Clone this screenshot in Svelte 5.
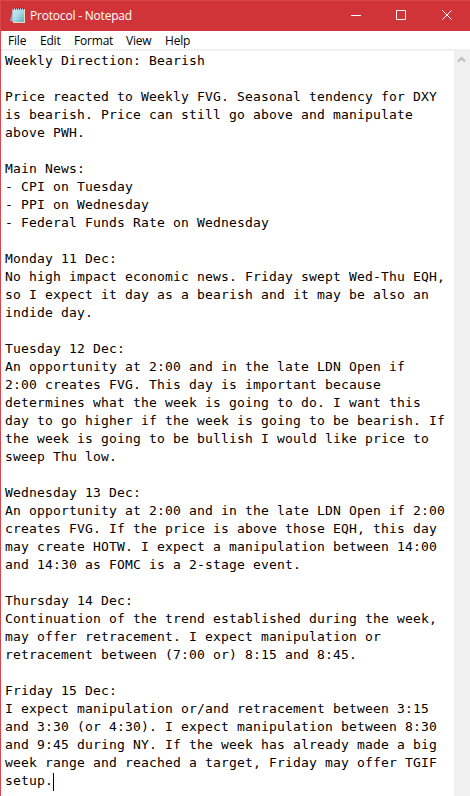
<script>
  const menus = ['File', 'Edit', 'Format', 'View', 'Help'];
  const text = `Weekly Direction: Bearish

Price reacted to Weekly FVG. Seasonal tendency for DXY
is bearish. Price can still go above and manipulate
above PWH.

Main News:
- CPI on Tuesday
- PPI on Wednesday
- Federal Funds Rate on Wednesday

Monday 11 Dec:
No high impact economic news. Friday swept Wed-Thu EQH,
so I expect it day as a bearish and it may be also an
indide day.

Tuesday 12 Dec:
An opportunity at 2:00 and in the late LDN Open if
2:00 creates FVG. This day is important because
determines what the week is going to do. I want this
day to go higher if the week is going to be bearish. If
the week is going to be bullish I would like price to
sweep Thu low.

Wednesday 13 Dec:
An opportunity at 2:00 and in the late LDN Open if 2:00
creates FVG. If the price is above those EQH, this day
may create HOTW. I expect a manipulation between 14:00
and 14:30 as FOMC is a 2-stage event.

Thursday 14 Dec:
Continuation of the trend established during the week,
may offer retracement. I expect manipulation or
retracement between (7:00 or) 8:15 and 8:45.

Friday 15 Dec:
I expect manipulation or/and retracement between 3:15
and 3:30 (or 4:30). I expect manipulation between 8:30
and 9:45 during NY. If the week has already made a big
week range and reached a target, Friday may offer TGIF
setup.`;
</script>

<div class="window">
  <header class="titlebar">
    <svg class="app-icon" width="18" height="18" viewBox="0 0 18 18">
      <defs>
        <linearGradient id="page" x1="0" y1="0" x2="1" y2="1">
          <stop offset="0" stop-color="#d3edf2" />
          <stop offset=".5" stop-color="#a5d6e2" />
          <stop offset="1" stop-color="#4fa9c2" />
        </linearGradient>
      </defs>
      <path d="M4 3L.8 14H4z" fill="#87a9b5" />
      <path d="M4 2H16V16H4z" fill="#e2dcc6" />
      <path d="M3.5 1.5H14.8V14.8H3.5z" fill="url(#page)" />
      <path d="M4 6H14M4 9H14M4 12H14" stroke="#d4edf2" stroke-width=".7" opacity=".6" />
      <path d="M4.5 .5V2.7M6.5 .5V2.7M8.5 .5V2.7M10.5 .5V2.7M12.5 .5V2.7M14.5 .5V2.7" stroke="#34515c" stroke-width="1" />
    </svg>
    <span class="title">Protocol - Notepad</span>
    <div class="controls">
      <svg width="46" height="30" viewBox="0 0 46 30"><path d="M18 14.5h10" /></svg>
      <svg width="46" height="30" viewBox="0 0 46 30"><path d="M17.5 9.5h9v9h-9z" /></svg>
      <svg width="46" height="30" viewBox="0 0 46 30"><path d="M17.3 9.3l9.4 9.4M26.7 9.3l-9.4 9.4" /></svg>
    </div>
  </header>
  <nav>
    {#each menus as m}<span class={m.toLowerCase()}>{m}</span>{/each}
  </nav>
  <main>
    <pre>{text}<i class="caret"></i></pre>
    <div class="scrollbar">
      <svg width="9" height="7" viewBox="0 0 9 7"><path d="M1 5.5L4.5 2L8 5.5" /></svg>
    </div>
  </main>
</div>

<style>
  .window {
    box-sizing: border-box;
    width: 470px;
    height: 796px;
    overflow: hidden;
    display: flex;
    flex-direction: column;
    background: #fff;
    border-left: 1px solid #d8464c;
    font-family: 'Open Sans', 'Noto Sans', sans-serif;
    color: #000;
  }
  .titlebar {
    box-sizing: border-box;
    height: 31px;
    flex: none;
    display: flex;
    align-items: center;
    background: #d13438;
    border-top: 1px solid #d8464c;
    color: #fff;
    padding-left: 8px;
  }
  .app-icon { flex: none; }
  .title {
    margin-left: 3px;
    font-size: 12px;
    line-height: 16px;
    letter-spacing: -0.2px;
    white-space: nowrap;
  }
  .controls { display: flex; margin-left: auto; margin-right: -1px; }
  .controls svg { fill: none; stroke: #fff; stroke-width: 1; }
  nav {
    box-sizing: border-box;
    height: 20px;
    flex: none;
    display: flex;
    border-bottom: 2px solid #f0f0f0;
    padding-left: 7px;
    font-size: 12px;
    line-height: 20px;
  }
  nav span { white-space: nowrap; letter-spacing: -0.2px; }
  .file { width: 32px; }
  .edit { width: 34px; }
  .format { width: 52px; }
  .view { width: 39px; }
  main { flex: 1; display: flex; min-height: 0; }
  pre {
    flex: 1;
    min-width: 0;
    margin: 0;
    padding: 1px 0 0 4px;
    font-family: 'DejaVu Sans Mono', monospace;
    font-size: 13px;
    line-height: 18px;
    letter-spacing: 0.174px;
  }
  .caret {
    display: inline-block;
    width: 1px;
    height: 18px;
    background: #000;
    vertical-align: -3px;
    margin: -3px 0;
  }
  .scrollbar {
    width: 16px;
    flex: none;
    background: #f0f0f0;
    display: flex;
    padding: 5px 0 0 3px;
    box-sizing: border-box;
  }
  .scrollbar path { fill: none; stroke: #bfbfbf; stroke-width: 2.2; }
</style>
